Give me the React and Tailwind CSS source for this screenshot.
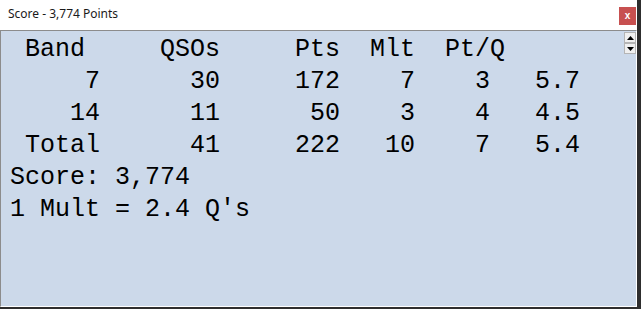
import React from "react";

const lines = [
  " Band     QSOs     Pts  Mlt  Pt/Q",
  "     7      30     172    7    3   5.7",
  "    14      11      50    3    4   4.5",
  " Total      41     222   10    7   5.4",
  "Score: 3,774",
  "1 Mult = 2.4 Q's",
];

const Arrow = ({ up }) => (
  <div className="w-[12px] h-[11px] bg-[#f0f0f0] border border-[#b5b5b5] flex items-center justify-center">
    <svg width="7" height="4" viewBox="0 0 7 4">
      {up ? (
        <path d="M0 4 L3.5 0 L7 4 Z" fill="#000" />
      ) : (
        <path d="M0 0 L3.5 4 L7 0 Z" fill="#000" />
      )}
    </svg>
  </div>
);

const App = () => {
  return (
    <div className="w-[641px] h-[309px] bg-[#2e2e2e] overflow-hidden">
      <div className="w-[637px] h-[307px] flex flex-col bg-white">
        <div className="h-[30px] flex items-start justify-between shrink-0">
          <span
            className="pl-[8px] pt-[6px] text-[12px] leading-[16px] text-[#1a1a1a]"
            style={{ fontFamily: "'Noto Sans', 'Open Sans', sans-serif" }}
          >
            Score - 3,774 Points
          </span>
          <div className="mt-[7px] mr-[1px] w-[17px] h-[18px] bg-[#c75050] flex items-center justify-center text-white text-[10px] font-bold leading-none font-['Liberation_Sans',sans-serif]">
            x
          </div>
        </div>
        <div className="flex-1 flex bg-[#ccd9ea] border-t border-t-[#8c8c8c] border-l border-l-[#8c8c8c] border-r border-r-white border-b border-b-white">
          <pre className="flex-1 pl-[9px] pt-[3px] text-[25px] leading-[32px] text-black font-['Liberation_Mono',monospace] whitespace-pre">
            {lines.join("\n")}
          </pre>
          <div className="flex flex-col pt-[1px] pr-0 w-[12px]">
            <Arrow up />
            <Arrow />
          </div>
        </div>
      </div>
    </div>
  );
};

export default App;
